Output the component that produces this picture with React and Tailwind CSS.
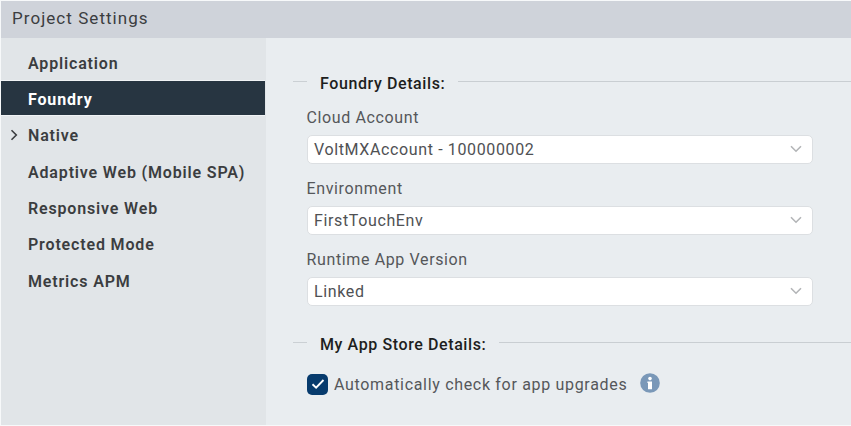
const navItems = [
  { label: 'Application' },
  { label: 'Foundry', active: true },
  { label: 'Native', expandable: true },
  { label: 'Adaptive Web (Mobile SPA)' },
  { label: 'Responsive Web' },
  { label: 'Protected Mode' },
  { label: 'Metrics APM' },
];

function NavItem({ label, active, expandable }) {
  return (
    <li
      className={`h-[36.4px] pr-px ${active ? 'font-bold tracking-[0.85px] text-white' : 'font-semibold tracking-[0.84px] text-[#3b3d40]'}`}
    >
      <div
        className={`flex h-[34px] w-full items-center pt-[3px] ${active ? 'bg-[#273541] shadow-[0_1px_0_#f0f3f5,0_-1px_0_#f0f3f5]' : ''}`}
      >
        <span className="flex w-[27px] pl-[9px]">
          {expandable && (
            <svg className="mb-[2px]" width="9" height="12" viewBox="0 0 9 12" fill="none" stroke="#3b3d40" strokeWidth="1.6">
              <path d="M1.5 1.3 6.3 6 1.5 10.7" />
            </svg>
          )}
        </span>
        {label}
      </div>
    </li>
  );
}

function SectionTitle({ children }) {
  return (
    <div className="flex h-6 items-center text-base font-medium tracking-[0.6px] text-[#1d1e20]">
      <span className="mb-[3px] h-px w-[14px] bg-[#cbd0d4]" />
      <h2 className="mx-[13px] pt-[2px] whitespace-nowrap">{children}</h2>
      <span className="mb-[3px] h-px flex-1 bg-[#c9ced2]" />
    </div>
  );
}

function SelectField({ label, value }) {
  return (
    <div className="flex h-[71px] flex-col pl-[14px]">
      <label className="-ml-[0.5px] h-[29px] leading-6 tracking-[0.63px] text-[#55575a]">{label}</label>
      <div className="flex h-[29px] w-[506px] items-center justify-between rounded-[5px] border border-[#dcdfe2] bg-white pr-2.5 pl-[6px] tracking-[0.63px] text-[#4f5154]">
        <span className="pt-px">{value}</span>
        <svg className="mb-[2px]" width="12" height="8" viewBox="0 0 12 8" fill="none" stroke="#b3b5b7" strokeWidth="1.6">
          <path d="M1 1.2 6 6.2 11 1.2" />
        </svg>
      </div>
    </div>
  );
}

export default function App() {
  return (
    <div className="flex h-[426px] w-[851px] flex-col overflow-hidden bg-[#f7f9fa] pt-px pb-px pl-px font-['Roboto',sans-serif] text-base leading-5">
      <header className="flex h-[37px] shrink-0 items-center bg-[#cfd3da] pb-[3px] pl-[11px] text-[17px] tracking-[1.05px] text-[#3b3d40]">
        <h1>Project Settings</h1>
      </header>
      <div className="flex min-h-0 flex-1">
        <nav className="w-[265px] shrink-0 bg-[#e1e5e8] pt-[7px]">
          <ul>
            {navItems.map((item) => (
              <NavItem key={item.label} {...item} />
            ))}
          </ul>
        </nav>
        <main className="flex-1 bg-[#e9edf0] pt-[33px] pl-[27px]">
          <SectionTitle>Foundry Details:</SectionTitle>
          <div className="pt-[11px]">
            <SelectField label="Cloud Account" value="VoltMXAccount - 100000002" />
            <SelectField label="Environment" value="FirstTouchEnv" />
            <SelectField label="Runtime App Version" value="Linked" />
          </div>
          <div className="pt-[13px]">
            <SectionTitle>My App Store Details:</SectionTitle>
          </div>
          <label className="flex items-center pt-[17px] pl-[14px] tracking-[0.68px] text-[#55575a]">
            <span className="flex size-[21px] items-center justify-center rounded-[5px] bg-[#073b6d]">
              <svg width="14" height="12" viewBox="0 0 14 12" fill="none" stroke="#fff" strokeWidth="1.9">
                <path d="M1.5 6.2 5.1 9.6 12.5 2" />
              </svg>
            </span>
            <span className="ml-[6px] pt-[2px]">Automatically check for app upgrades</span>
            <svg className="mb-0.5 ml-[13px]" width="20" height="20" viewBox="0 0 20 20">
              <circle cx="10" cy="10" r="9.8" fill="#7a98b8" />
              <circle cx="10" cy="5.6" r="1.8" fill="#fff" />
              <path d="M8 8.4h4v7.8H8V9.9h-.6V8.4z" fill="#fff" />
            </svg>
          </label>
        </main>
      </div>
    </div>
  );
}
